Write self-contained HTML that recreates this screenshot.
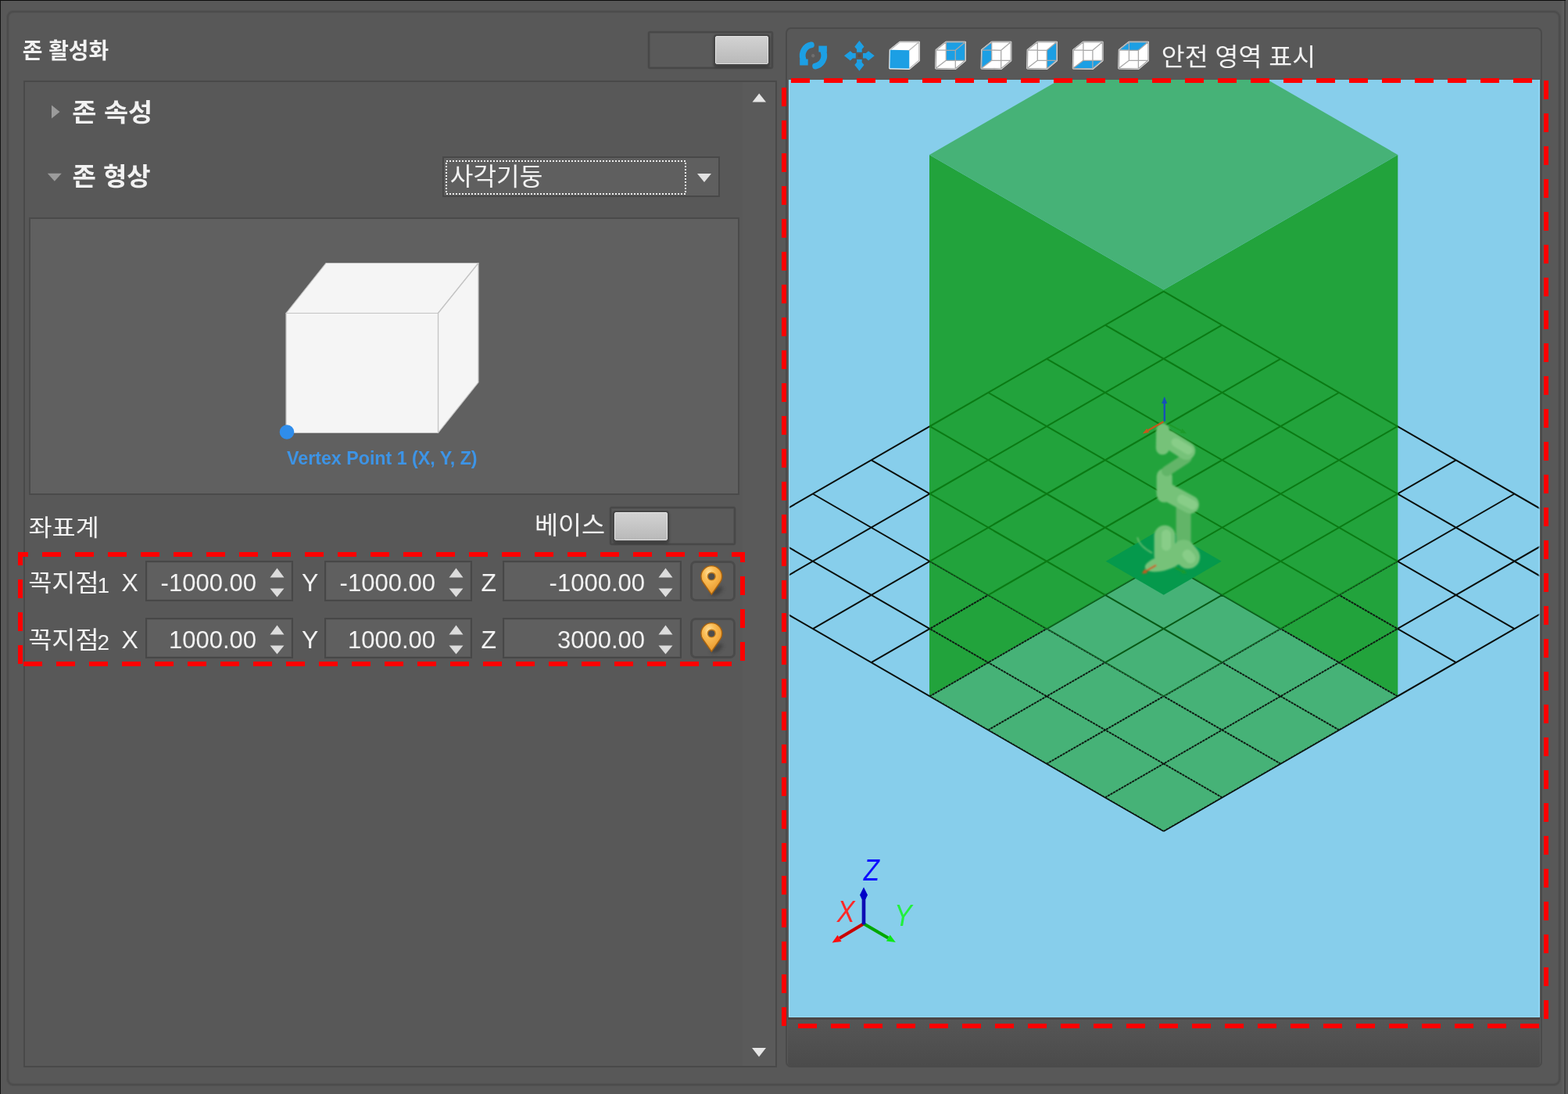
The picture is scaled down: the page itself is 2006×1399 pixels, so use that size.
<!DOCTYPE html>
<html><head><meta charset="utf-8"><title>Zone</title>
<style>
html,body{margin:0;padding:0;background:#585858;}
body{width:2006px;height:1399px;overflow:hidden;position:relative;font-family:"Liberation Sans",sans-serif;color:#f0f0f0;}
.abs{position:absolute;}
.frame{position:absolute;box-sizing:border-box;border:2px solid #4a4a4a;}
.spin{position:absolute;box-sizing:border-box;border:2px solid #474747;background:#5f5f5f;box-shadow:inset 0 0 0 1px #5a5a5a;}
.num{position:absolute;font-size:31px;line-height:36px;transform:scaleY(1.04);color:#f2f2f2;text-align:right;white-space:nowrap;}
.lab{position:absolute;font-size:32px;line-height:36px;color:#f2f2f2;white-space:nowrap;}
.tog{position:absolute;box-sizing:border-box;border:2px solid #484848;border-radius:3px;background:#5a5a5a;box-shadow:inset 0 0 0 1px #525252, 0 0 0 0.6px #505050;}
.knob{position:absolute;box-sizing:border-box;border:1px solid #e4e4e4;border-radius:2px;background:linear-gradient(#d2d2d2,#b9b9b9);box-shadow:0 0 0 2px #454545, 0 2px 3px 2px rgba(40,40,40,.6);}
.pinb{position:absolute;box-sizing:border-box;border:3px solid #4a4a4a;border-radius:7px;background:#5a5a5a;}
svg{position:absolute;left:0;top:0;}
#shot{position:absolute;left:0;top:0;width:2006px;height:1399px;filter:blur(0.55px);}
</style></head><body>
<div id="shot">

<div class="abs" style="left:0;top:0;width:2003px;height:1.4px;background:#0c0c0c"></div>
<div class="abs" style="left:0;top:0;width:1.4px;height:1399px;background:#141414"></div>
<div class="abs" style="left:2001px;top:1px;width:2px;height:1398px;background:#424242"></div>
<div class="abs" style="left:1997px;top:1px;width:4px;height:1398px;background:linear-gradient(90deg,#585858,#616161)"></div>
<div class="frame" style="left:8.5px;top:13.5px;width:1987px;height:1374px;border:2px solid #4c4c4c;border-radius:8px;box-shadow:0 0 0 1px #525252, inset 0 0 0 1px #545454;"></div>
<div class="frame" style="left:30px;top:103px;width:964px;height:1262px;border-color:#494949"></div>
<div class="abs" style="left:950px;top:105px;width:42px;height:1258px;background:#5a5a5a"></div>
<div class="frame" style="left:1004.5px;top:35.3px;width:968.5px;height:1329.4px;border-radius:7px;border-color:#4a4a4a"></div>
<div class="abs" style="left:1008px;top:1301px;width:962px;height:62px;background:linear-gradient(#565656,#4b4b4b);border-radius:0 0 4px 4px"></div>
<div class="abs" style="left:1008px;top:1301px;width:962px;height:2.5px;background:#4a4545"></div>
<div class="frame" style="left:37px;top:278px;width:909px;height:355px;background:#606060;border-color:#4a4a4a"></div>
<div class="frame" style="left:566px;top:200px;width:355px;height:52px;background:#5f5f5f;border-color:#484848"></div>
<div class="tog" style="left:829px;top:40px;width:160px;height:48px"></div>
<div class="knob" style="left:915px;top:46px;width:68px;height:36px"></div>
<div class="tog" style="left:780px;top:648px;width:161px;height:49px"></div>
<div class="knob" style="left:786px;top:655px;width:68px;height:36px"></div>
<div class="spin" style="left:186px;top:717px;width:189px;height:52px"></div>
<div class="num" style="left:186px;top:727.5px;width:142px">-1000.00</div>
<div class="spin" style="left:415px;top:717px;width:189px;height:52px"></div>
<div class="num" style="left:415px;top:727.5px;width:142px">-1000.00</div>
<div class="spin" style="left:643px;top:717px;width:229px;height:52px"></div>
<div class="num" style="left:643px;top:727.5px;width:182px">-1000.00</div>
<div class="pinb" style="left:883px;top:717px;width:58px;height:52px"></div>
<div class="lab" style="left:155.6px;top:726.8px">X</div>
<div class="lab" style="left:386px;top:726.8px">Y</div>
<div class="lab" style="left:615.5px;top:726.8px">Z</div>
<div class="lab" style="left:124.5px;top:730.6px;font-size:28px">1</div>
<div class="spin" style="left:186px;top:790px;width:189px;height:52px"></div>
<div class="num" style="left:186px;top:800.5px;width:142px">1000.00</div>
<div class="spin" style="left:415px;top:790px;width:189px;height:52px"></div>
<div class="num" style="left:415px;top:800.5px;width:142px">1000.00</div>
<div class="spin" style="left:643px;top:790px;width:229px;height:52px"></div>
<div class="num" style="left:643px;top:800.5px;width:182px">3000.00</div>
<div class="pinb" style="left:883px;top:790px;width:58px;height:52px"></div>
<div class="lab" style="left:155.6px;top:799.8px">X</div>
<div class="lab" style="left:386px;top:799.8px">Y</div>
<div class="lab" style="left:615.5px;top:799.8px">Z</div>
<div class="lab" style="left:124.5px;top:803.6px;font-size:28px">2</div>
<div class="abs" id="vtx" style="left:367.4px;top:571.5px;font-size:23px;font-weight:bold;line-height:28px;color:#3d94e6;white-space:nowrap;transform-origin:0 0;transform:scaleX(1.01)">Vertex Point 1 (X, Y, Z)</div>
<svg width="2006" height="1399" viewBox="0 0 2006 1399">
<defs><clipPath id="vp"><rect x="1009" y="102" width="961" height="1199"/></clipPath><clipPath id="dk"><polygon points="1189.0,198.0 1488.7,370.6 1788.3,198.0 1788.3,890.0 1488.7,717.4 1189.0,890.0"/></clipPath><filter id="b1" x="-20%" y="-20%" width="140%" height="140%"><feGaussianBlur stdDeviation="0.8"/></filter><filter id="b05" x="-20%" y="-20%" width="140%" height="140%"><feGaussianBlur stdDeviation="0.5"/></filter></defs><g clip-path="url(#vp)"><rect x="1008" y="101" width="963" height="1201" fill="#87ceeb"/><polygon points="1189.0,198.0 1488.7,370.6 1788.3,198.0 1788.3,890.0 1488.7,717.4 1189.0,890.0" fill="#22a33c"/><polygon points="1189.0,198.0 1488.7,25.4 1788.3,198.0 1488.7,370.6" fill="#46b277"/><polygon points="1189.0,890.0 1488.7,717.4 1788.3,890.0 1488.7,1062.6" fill="#46b277"/><path d="M1488.7,372.6L890.3,717.8M1488.7,372.6L2087.1,717.8M1563.5,415.7L965.1,760.9M1413.9,415.7L2012.3,760.9M1638.3,458.9L1039.9,804.1M1339.1,458.9L1937.5,804.1M1713.1,502.0L1114.7,847.2M1264.3,502.0L1862.7,847.2M1787.9,545.2L1189.5,890.4M1189.5,545.2L1787.9,890.4M1862.7,588.3L1264.3,933.5M1114.7,588.3L1713.1,933.5M1937.5,631.5L1339.1,976.7M1039.9,631.5L1638.3,976.7M2012.3,674.6L1413.9,1019.8M965.1,674.6L1563.5,1019.8M2087.1,717.8L1488.7,1063.0M890.3,717.8L1488.7,1063.0" stroke="#0a0f0c" stroke-width="2" fill="none"/><clipPath id="tn"><polygon points="1188.0,90.0 1790.0,90.0 1790.0,716.6 1488.7,890.4 1188.0,716.6"/></clipPath><clipPath id="tl"><polygon points="1189.0,890.0 1488.7,717.4 1788.3,890.0 1488.7,1062.6"/></clipPath><g clip-path="url(#tn)"><g clip-path="url(#dk)"><path d="M1488.7,372.6L890.3,717.8M1488.7,372.6L2087.1,717.8M1563.5,415.7L965.1,760.9M1413.9,415.7L2012.3,760.9M1638.3,458.9L1039.9,804.1M1339.1,458.9L1937.5,804.1M1713.1,502.0L1114.7,847.2M1264.3,502.0L1862.7,847.2M1787.9,545.2L1189.5,890.4M1189.5,545.2L1787.9,890.4M1862.7,588.3L1264.3,933.5M1114.7,588.3L1713.1,933.5M1937.5,631.5L1339.1,976.7M1039.9,631.5L1638.3,976.7M2012.3,674.6L1413.9,1019.8M965.1,674.6L1563.5,1019.8M2087.1,717.8L1488.7,1063.0M890.3,717.8L1488.7,1063.0" stroke="#22a33c" stroke-width="3.6" fill="none"/><path d="M1488.7,372.6L890.3,717.8M1488.7,372.6L2087.1,717.8M1563.5,415.7L965.1,760.9M1413.9,415.7L2012.3,760.9M1638.3,458.9L1039.9,804.1M1339.1,458.9L1937.5,804.1M1713.1,502.0L1114.7,847.2M1264.3,502.0L1862.7,847.2M1787.9,545.2L1189.5,890.4M1189.5,545.2L1787.9,890.4M1862.7,588.3L1264.3,933.5M1114.7,588.3L1713.1,933.5M1937.5,631.5L1339.1,976.7M1039.9,631.5L1638.3,976.7M2012.3,674.6L1413.9,1019.8M965.1,674.6L1563.5,1019.8M2087.1,717.8L1488.7,1063.0M890.3,717.8L1488.7,1063.0" stroke="#0b7a14" stroke-width="2" fill="none"/></g><g clip-path="url(#tl)"><path d="M1488.7,372.6L890.3,717.8M1488.7,372.6L2087.1,717.8M1563.5,415.7L965.1,760.9M1413.9,415.7L2012.3,760.9M1638.3,458.9L1039.9,804.1M1339.1,458.9L1937.5,804.1M1713.1,502.0L1114.7,847.2M1264.3,502.0L1862.7,847.2M1787.9,545.2L1189.5,890.4M1189.5,545.2L1787.9,890.4M1862.7,588.3L1264.3,933.5M1114.7,588.3L1713.1,933.5M1937.5,631.5L1339.1,976.7M1039.9,631.5L1638.3,976.7M2012.3,674.6L1413.9,1019.8M965.1,674.6L1563.5,1019.8M2087.1,717.8L1488.7,1063.0M890.3,717.8L1488.7,1063.0" stroke="#46b277" stroke-width="3.6" fill="none"/><path d="M1488.7,372.6L890.3,717.8M1488.7,372.6L2087.1,717.8M1563.5,415.7L965.1,760.9M1413.9,415.7L2012.3,760.9M1638.3,458.9L1039.9,804.1M1339.1,458.9L1937.5,804.1M1713.1,502.0L1114.7,847.2M1264.3,502.0L1862.7,847.2M1787.9,545.2L1189.5,890.4M1189.5,545.2L1787.9,890.4M1862.7,588.3L1264.3,933.5M1114.7,588.3L1713.1,933.5M1937.5,631.5L1339.1,976.7M1039.9,631.5L1638.3,976.7M2012.3,674.6L1413.9,1019.8M965.1,674.6L1563.5,1019.8M2087.1,717.8L1488.7,1063.0M890.3,717.8L1488.7,1063.0" stroke="#085a16" stroke-width="2" fill="none"/></g></g><clipPath id="fr"><polygon points="1189.0,717.8 1488.7,890.4 1788.3,717.8 1788.3,890.0 1488.7,1062.6 1189.0,890.0"/></clipPath><g clip-path="url(#fr)"><g clip-path="url(#dk)"><path d="M1488.7,372.6L890.3,717.8M1488.7,372.6L2087.1,717.8M1563.5,415.7L965.1,760.9M1413.9,415.7L2012.3,760.9M1638.3,458.9L1039.9,804.1M1339.1,458.9L1937.5,804.1M1713.1,502.0L1114.7,847.2M1264.3,502.0L1862.7,847.2M1787.9,545.2L1189.5,890.4M1189.5,545.2L1787.9,890.4M1862.7,588.3L1264.3,933.5M1114.7,588.3L1713.1,933.5M1937.5,631.5L1339.1,976.7M1039.9,631.5L1638.3,976.7M2012.3,674.6L1413.9,1019.8M965.1,674.6L1563.5,1019.8M2087.1,717.8L1488.7,1063.0M890.3,717.8L1488.7,1063.0" stroke="#22a33c" stroke-width="3.8" fill="none"/></g><g clip-path="url(#tl)"><path d="M1488.7,372.6L890.3,717.8M1488.7,372.6L2087.1,717.8M1563.5,415.7L965.1,760.9M1413.9,415.7L2012.3,760.9M1638.3,458.9L1039.9,804.1M1339.1,458.9L1937.5,804.1M1713.1,502.0L1114.7,847.2M1264.3,502.0L1862.7,847.2M1787.9,545.2L1189.5,890.4M1189.5,545.2L1787.9,890.4M1862.7,588.3L1264.3,933.5M1114.7,588.3L1713.1,933.5M1937.5,631.5L1339.1,976.7M1039.9,631.5L1638.3,976.7M2012.3,674.6L1413.9,1019.8M965.1,674.6L1563.5,1019.8M2087.1,717.8L1488.7,1063.0M890.3,717.8L1488.7,1063.0" stroke="#46b277" stroke-width="3.8" fill="none"/></g><path d="M1488.7,372.6L890.3,717.8M1488.7,372.6L2087.1,717.8M1563.5,415.7L965.1,760.9M1413.9,415.7L2012.3,760.9M1638.3,458.9L1039.9,804.1M1339.1,458.9L1937.5,804.1M1713.1,502.0L1114.7,847.2M1264.3,502.0L1862.7,847.2M1787.9,545.2L1189.5,890.4M1189.5,545.2L1787.9,890.4M1862.7,588.3L1264.3,933.5M1114.7,588.3L1713.1,933.5M1937.5,631.5L1339.1,976.7M1039.9,631.5L1638.3,976.7M2012.3,674.6L1413.9,1019.8M965.1,674.6L1563.5,1019.8M2087.1,717.8L1488.7,1063.0M890.3,717.8L1488.7,1063.0" stroke="#0c1810" stroke-width="1.9" stroke-dasharray="3.2 0.8" fill="none"/></g><polygon points="1414.7,717.8 1488.7,674.8 1562.7,717.8 1488.7,760.8" fill="#05994c"/><g filter="url(#b1)"><path d="M1455.1,687.2 Q1457.1,698.2 1474.1,707.3" stroke="#6fbf72" stroke-width="1.6" fill="none"/><ellipse cx="1488.1" cy="720.3" rx="24" ry="9.5" fill="#76c279" transform="rotate(-14 1488.1 720.3)"/><line x1="1490.1" y1="685.2" x2="1490.1" y2="710.3" stroke="#76c279" stroke-width="27" stroke-linecap="round"/><line x1="1514.1" y1="650.2" x2="1514.1" y2="698.2" stroke="#62b568" stroke-width="19" stroke-linecap="round"/><line x1="1514.5" y1="705.3" x2="1520.1" y2="712.3" stroke="#76c279" stroke-width="30" stroke-linecap="round"/><line x1="1490.1" y1="710.3" x2="1512.1" y2="712.3" stroke="#76c279" stroke-width="20" stroke-linecap="round"/><line x1="1492.1" y1="683.2" x2="1492.1" y2="698.2" stroke="#88cd88" stroke-width="12" stroke-linecap="round"/><line x1="1519.1" y1="709.3" x2="1523.1" y2="713.9" stroke="#88cd88" stroke-width="13" stroke-linecap="round"/><line x1="1489.7" y1="609.1" x2="1489.7" y2="632.6" stroke="#76c279" stroke-width="20" stroke-linecap="round"/><line x1="1491.1" y1="628.2" x2="1522.5" y2="645.2" stroke="#76c279" stroke-width="23" stroke-linecap="round"/><line x1="1512.1" y1="638.6" x2="1525.8" y2="645.8" stroke="#88cd88" stroke-width="12" stroke-linecap="round"/><line x1="1518.1" y1="585.7" x2="1492.5" y2="602.5" stroke="#62b568" stroke-width="13" stroke-linecap="round"/><line x1="1487.7" y1="550.1" x2="1487.3" y2="573.1" stroke="#76c279" stroke-width="17" stroke-linecap="round"/><line x1="1495.1" y1="562.1" x2="1517.7" y2="576.5" stroke="#76c279" stroke-width="23" stroke-linecap="round"/><line x1="1504.1" y1="565.7" x2="1520.5" y2="575.7" stroke="#88cd88" stroke-width="11" stroke-linecap="round"/><line x1="1479.1" y1="722.7" x2="1466.3" y2="730.2" stroke="#c8561a" stroke-width="2.2"/><polygon points="1460.7,733.5 1464.6,727.4 1467.9,733.0" fill="#c8561a"/><line x1="1503.1" y1="725.5" x2="1512.8" y2="730.7" stroke="#1f9a2a" stroke-width="2.0"/><polygon points="1518.1,733.5 1511.4,733.3 1514.3,728.0" fill="#1f9a2a"/></g><g filter="url(#b05)"><line x1="1489.8" y1="538.7" x2="1489.7" y2="516.0" stroke="#1450b8" stroke-width="2.4"/><polygon points="1489.7,507.0 1493.2,516.0 1486.2,516.0" fill="#1450b8"/><line x1="1488.5" y1="539.2" x2="1468.6" y2="550.5" stroke="#c8561a" stroke-width="2.2"/><polygon points="1461.7,554.5 1467.1,547.9 1470.1,553.1" fill="#c8561a"/><line x1="1495.5" y1="542.7" x2="1511.1" y2="550.8" stroke="#1f9a2a" stroke-width="2.0"/><polygon points="1518.1,554.5 1509.7,553.4 1512.4,548.1" fill="#1f9a2a"/></g><g filter="url(#b05)"><line x1="1105.0" y1="1181.3" x2="1074.0" y2="1199.8" stroke="#c80000" stroke-width="4.2"/><polygon points="1064.6,1205.5 1071.6,1195.8 1076.5,1203.9" fill="#ff0a0a"/><line x1="1105.0" y1="1181.3" x2="1136.3" y2="1199.5" stroke="#00a800" stroke-width="4.2"/><polygon points="1145.8,1205.0 1133.9,1203.6 1138.7,1195.4" fill="#10e818"/><line x1="1105.0" y1="1182.3" x2="1105.0" y2="1148" stroke="#0a0ab4" stroke-width="4.6"/><polygon points="1105.0,1134.5 1110.0,1144.5 1107.3,1150 1102.7,1150 1100.0,1144.5" fill="#0000c8"/></g><g font-family="Liberation Sans, sans-serif" font-style="italic" font-size="38" filter="url(#b05)"><text transform="translate(1107.6 1126.3) scale(.87 1)" x="-3.2" y="0" fill="#1010ff">Z</text><text transform="translate(1073.9 1179.4) scale(.9 1)" x="-3.5" y="0" fill="#ff2a2a">X</text><text transform="translate(1147.8 1184.2) scale(.89 1)" x="-4.2" y="0" fill="#22f03c">Y</text></g><path d="M1009.6,102 V1300.6 H1969.2 V102" fill="none" stroke="#9be0ff" stroke-width="1.3" opacity=".85"/></g>
<g font-family="'Liberation Sans','Noto Sans CJK KR',sans-serif" fill="#f2f2f2">
<text transform="translate(28.80 75.10) scale(0.996 1)" x="0" y="0" font-size="28" font-weight="bold">존 활성화</text>
<text transform="translate(92.36 154.80) scale(1.083 1)" x="0" y="0" font-size="31.3" font-weight="bold">존 속성</text>
<text transform="translate(92.40 237.23) scale(1.021 1)" x="0" y="0" font-size="32.3" font-weight="bold">존 형상</text>
<text transform="translate(575.80 237.36) scale(1.029 1)" x="0" y="0" font-size="31.3">사각기둥</text>
<text transform="translate(36.51 684.87) scale(1.087 1)" x="0" y="0" font-size="30.1">좌표계</text>
<text transform="translate(683.90 683.18) scale(1.022 1)" x="0" y="0" font-size="32">베이스</text>
<text transform="translate(36.13 756.30) scale(1.064 1)" x="0" y="0" font-size="30.9">꼭지점</text>
<text transform="translate(36.13 829.30) scale(1.064 1)" x="0" y="0" font-size="30.9">꼭지점</text>
<text transform="translate(1485.84 83.51) scale(1.024 1)" x="0" y="0" font-size="31.7">안전 영역 표시</text>
</g>
<polygon points="66,134.5 76.5,143 66,151.5" fill="#9b9b9b"/>
<polygon points="60.8,221.8 78.8,221.8 69.8,231.8" fill="#9b9b9b"/>
<polygon points="962.5,130.5 980,130.5 971.2,119.5" fill="#e6e6e6"/>
<polygon points="962,1340 980,1340 971,1351.5" fill="#e6e6e6"/>
<rect x="571" y="206" width="306" height="42" fill="none" stroke="#f0f0f0" stroke-width="2" stroke-dasharray="2 2"/>
<polygon points="892,222 910,222 901,233" fill="#e2e2e2"/>
<polygon points="345.5,738.5 363.5,738.5 354.5,726.5" fill="#dcdcdc"/>
<polygon points="345.5,752.5 363.5,752.5 354.5,763.5" fill="#dcdcdc"/>
<polygon points="574.5,738.5 592.5,738.5 583.5,726.5" fill="#dcdcdc"/>
<polygon points="574.5,752.5 592.5,752.5 583.5,763.5" fill="#dcdcdc"/>
<polygon points="842.5,738.5 860.5,738.5 851.5,726.5" fill="#dcdcdc"/>
<polygon points="842.5,752.5 860.5,752.5 851.5,763.5" fill="#dcdcdc"/>
<polygon points="345.5,811.5 363.5,811.5 354.5,799.5" fill="#dcdcdc"/>
<polygon points="345.5,825.5 363.5,825.5 354.5,836.5" fill="#dcdcdc"/>
<polygon points="574.5,811.5 592.5,811.5 583.5,799.5" fill="#dcdcdc"/>
<polygon points="574.5,825.5 592.5,825.5 583.5,836.5" fill="#dcdcdc"/>
<polygon points="842.5,811.5 860.5,811.5 851.5,799.5" fill="#dcdcdc"/>
<polygon points="842.5,825.5 860.5,825.5 851.5,836.5" fill="#dcdcdc"/>
<g stroke="#c4c4c4" stroke-width="1.2" fill="#f5f5f5" stroke-linejoin="round"><polygon points="366,400.5 417,336.5 612,336.5 560.5,400.5"/><polygon points="560.5,400.5 612,336.5 612,489 560.5,553.5"/><rect x="366" y="400.5" width="194.5" height="153"/></g>
<circle cx="367" cy="552.5" r="9.3" fill="#2f8deb"/>
<g filter="url(#b05)"><path d="M1037.87,57.45A13.8,13.8 0 0 0 1027.38,75.26" stroke="#1e9fe4" stroke-width="7.8" fill="none" stroke-linecap="round"/><path d="M1043.13,84.55A13.8,13.8 0 0 0 1053.62,66.74" stroke="#1e9fe4" stroke-width="7.8" fill="none" stroke-linecap="round"/><rect x="1023.2" y="75.6" width="10.5" height="7.9" fill="#1e9fe4"/><rect x="1047.4" y="58.6" width="10.5" height="7.9" fill="#1e9fe4"/><circle cx="1040.2" cy="71.2" r="2.2" fill="#6e6e6e"/></g><g filter="url(#b05)" fill="#1e9fe4"><g transform="rotate(0 1099.4 71.3)"><polygon points="1099.4,51.9 1105.5,59.699999999999996 1102.7,62.9 1102.7,66.7 1096.1000000000001,66.7 1096.1000000000001,62.9 1093.3000000000002,59.699999999999996"/></g><g transform="rotate(90 1099.4 71.3)"><polygon points="1099.4,51.9 1105.5,59.699999999999996 1102.7,62.9 1102.7,66.7 1096.1000000000001,66.7 1096.1000000000001,62.9 1093.3000000000002,59.699999999999996"/></g><g transform="rotate(180 1099.4 71.3)"><polygon points="1099.4,51.9 1105.5,59.699999999999996 1102.7,62.9 1102.7,66.7 1096.1000000000001,66.7 1096.1000000000001,62.9 1093.3000000000002,59.699999999999996"/></g><g transform="rotate(270 1099.4 71.3)"><polygon points="1099.4,51.9 1105.5,59.699999999999996 1102.7,62.9 1102.7,66.7 1096.1000000000001,66.7 1096.1000000000001,62.9 1093.3000000000002,59.699999999999996"/></g><rect x="1097.3000000000002" y="69.2" width="4.2" height="4.2" fill="#5c4c42"/></g><g filter="url(#b05)"><polygon points="1138.8,63.8 1151.3,53.8 1175.8,53.8 1175.8,77.3 1163.3,87.8 1138.3,87.3" fill="#ffffff" stroke="#ffffff" stroke-width="2.2" stroke-linejoin="round"/><polygon points="1138.8,63.8 1163.3,64.3 1163.3,87.8 1138.3,87.3" fill="#1e9fe4" /><path d="M1138.8,63.8L1151.3,53.8M1163.3,64.3L1175.8,53.8M1163.3,87.8L1175.8,77.3M1151.3,53.8L1175.8,53.8M1175.8,53.8L1175.8,77.3" stroke="#b9b9b9" stroke-width="1.3" fill="none" stroke-linecap="round"/></g><g filter="url(#b05)"><polygon points="1197.8,63.8 1210.3,53.8 1234.8,53.8 1234.8,77.3 1222.3,87.8 1197.3,87.3" fill="#ffffff" stroke="#ffffff" stroke-width="2.2" stroke-linejoin="round"/><polygon points="1210.3,53.8 1234.8,53.8 1234.8,77.3 1210.3,77.3" fill="#1e9fe4" /><path d="M1197.8,63.8L1222.3,64.3M1222.3,64.3L1222.3,87.8M1222.3,87.8L1197.3,87.3M1197.3,87.3L1197.8,63.8M1210.3,53.8L1234.8,53.8M1234.8,53.8L1234.8,77.3M1234.8,77.3L1210.3,77.3M1210.3,77.3L1210.3,53.8M1197.8,63.8L1210.3,53.8M1222.3,64.3L1234.8,53.8M1222.3,87.8L1234.8,77.3M1197.3,87.3L1210.3,77.3" stroke="#a8a8a8" stroke-width="1.3" fill="none" stroke-linecap="round"/></g><g filter="url(#b05)"><polygon points="1256.2,63.8 1268.7,53.8 1293.2,53.8 1293.2,77.3 1280.7,87.8 1255.7,87.3" fill="#ffffff" stroke="#ffffff" stroke-width="2.2" stroke-linejoin="round"/><polygon points="1256.2,63.8 1268.7,53.8 1268.7,77.3 1255.7,87.3" fill="#1e9fe4" /><path d="M1256.2,63.8L1280.7,64.3M1280.7,64.3L1280.7,87.8M1280.7,87.8L1255.7,87.3M1255.7,87.3L1256.2,63.8M1268.7,53.8L1293.2,53.8M1293.2,53.8L1293.2,77.3M1293.2,77.3L1268.7,77.3M1268.7,77.3L1268.7,53.8M1256.2,63.8L1268.7,53.8M1280.7,64.3L1293.2,53.8M1280.7,87.8L1293.2,77.3M1255.7,87.3L1268.7,77.3" stroke="#a8a8a8" stroke-width="1.3" fill="none" stroke-linecap="round"/></g><g filter="url(#b05)"><polygon points="1314.8,63.8 1327.3,53.8 1351.8,53.8 1351.8,77.3 1339.3,87.8 1314.3,87.3" fill="#ffffff" stroke="#ffffff" stroke-width="2.2" stroke-linejoin="round"/><polygon points="1339.3,64.3 1351.8,53.8 1351.8,77.3 1339.3,87.8" fill="#1e9fe4" /><path d="M1314.8,63.8L1339.3,64.3M1339.3,64.3L1339.3,87.8M1339.3,87.8L1314.3,87.3M1314.3,87.3L1314.8,63.8M1327.3,53.8L1351.8,53.8M1351.8,53.8L1351.8,77.3M1351.8,77.3L1327.3,77.3M1327.3,77.3L1327.3,53.8M1314.8,63.8L1327.3,53.8M1339.3,64.3L1351.8,53.8M1339.3,87.8L1351.8,77.3M1314.3,87.3L1327.3,77.3" stroke="#a8a8a8" stroke-width="1.3" fill="none" stroke-linecap="round"/></g><g filter="url(#b05)"><polygon points="1373.4,63.8 1385.9,53.8 1410.4,53.8 1410.4,77.3 1397.9,87.8 1372.9,87.3" fill="#ffffff" stroke="#ffffff" stroke-width="2.2" stroke-linejoin="round"/><polygon points="1372.9,87.3 1397.9,87.8 1410.4,77.3 1385.9,77.3" fill="#1e9fe4" /><path d="M1373.4,63.8L1397.9,64.3M1397.9,64.3L1397.9,87.8M1397.9,87.8L1372.9,87.3M1372.9,87.3L1373.4,63.8M1385.9,53.8L1410.4,53.8M1410.4,53.8L1410.4,77.3M1410.4,77.3L1385.9,77.3M1385.9,77.3L1385.9,53.8M1373.4,63.8L1385.9,53.8M1397.9,64.3L1410.4,53.8M1397.9,87.8L1410.4,77.3M1372.9,87.3L1385.9,77.3" stroke="#a8a8a8" stroke-width="1.3" fill="none" stroke-linecap="round"/></g><g filter="url(#b05)"><polygon points="1431.9,63.8 1444.4,53.8 1468.9,53.8 1468.9,77.3 1456.4,87.8 1431.4,87.3" fill="#ffffff" stroke="#ffffff" stroke-width="2.2" stroke-linejoin="round"/><polygon points="1431.9,63.8 1444.4,53.8 1468.9,53.8 1456.4,64.3" fill="#1e9fe4" /><path d="M1431.9,63.8L1456.4,64.3M1456.4,64.3L1456.4,87.8M1456.4,87.8L1431.4,87.3M1431.4,87.3L1431.9,63.8M1444.4,53.8L1468.9,53.8M1468.9,53.8L1468.9,77.3M1468.9,77.3L1444.4,77.3M1444.4,77.3L1444.4,53.8M1431.9,63.8L1444.4,53.8M1456.4,64.3L1468.9,53.8M1456.4,87.8L1468.9,77.3M1431.4,87.3L1444.4,77.3" stroke="#a8a8a8" stroke-width="1.3" fill="none" stroke-linecap="round"/></g>
<defs><radialGradient id="ping" cx="38%" cy="26%" r="75%"><stop offset="0" stop-color="#ffe2a0"/><stop offset=".35" stop-color="#fbbd55"/><stop offset="1" stop-color="#e8962a"/></radialGradient><filter id="b2" x="-50%" y="-50%" width="200%" height="200%"><feGaussianBlur stdDeviation="2"/></filter></defs><ellipse cx="917.3" cy="756.2" rx="9" ry="4" fill="#2e2e2e" opacity=".55" filter="url(#b2)" transform="rotate(-35 917.3 756.2)"/><path d="M910.3,760.2 L899.74,745.25 A13.4,13.4 0 1 1 920.86,745.25 Z" fill="url(#ping)" stroke="#a8620f" stroke-width="1.4" stroke-linejoin="round" filter="url(#b05)"/><circle cx="910.3" cy="737.0" r="5.6" fill="#c27a1a" filter="url(#b05)"/><circle cx="910.3" cy="737.3" r="4.1" fill="#4d4d4d" filter="url(#b05)"/><ellipse cx="917.3" cy="829.2" rx="9" ry="4" fill="#2e2e2e" opacity=".55" filter="url(#b2)" transform="rotate(-35 917.3 829.2)"/><path d="M910.3,833.2 L899.74,818.25 A13.4,13.4 0 1 1 920.86,818.25 Z" fill="url(#ping)" stroke="#a8620f" stroke-width="1.4" stroke-linejoin="round" filter="url(#b05)"/><circle cx="910.3" cy="810.0" r="5.6" fill="#c27a1a" filter="url(#b05)"/><circle cx="910.3" cy="810.3" r="4.1" fill="#4d4d4d" filter="url(#b05)"/>
</svg></div>
<svg width="2006" height="1399" viewBox="0 0 2006 1399">
<path d="M26,849 L26,709 L950,709 L950,849 Z" fill="none" stroke="#ff0000" stroke-width="6" stroke-dasharray="24 18"/>
<path d="M1003,1312 L1003,103 L1978,103 L1978,1312 Z" fill="none" stroke="#ff0000" stroke-width="6" stroke-dasharray="24 18"/>
</svg>
</body></html>
